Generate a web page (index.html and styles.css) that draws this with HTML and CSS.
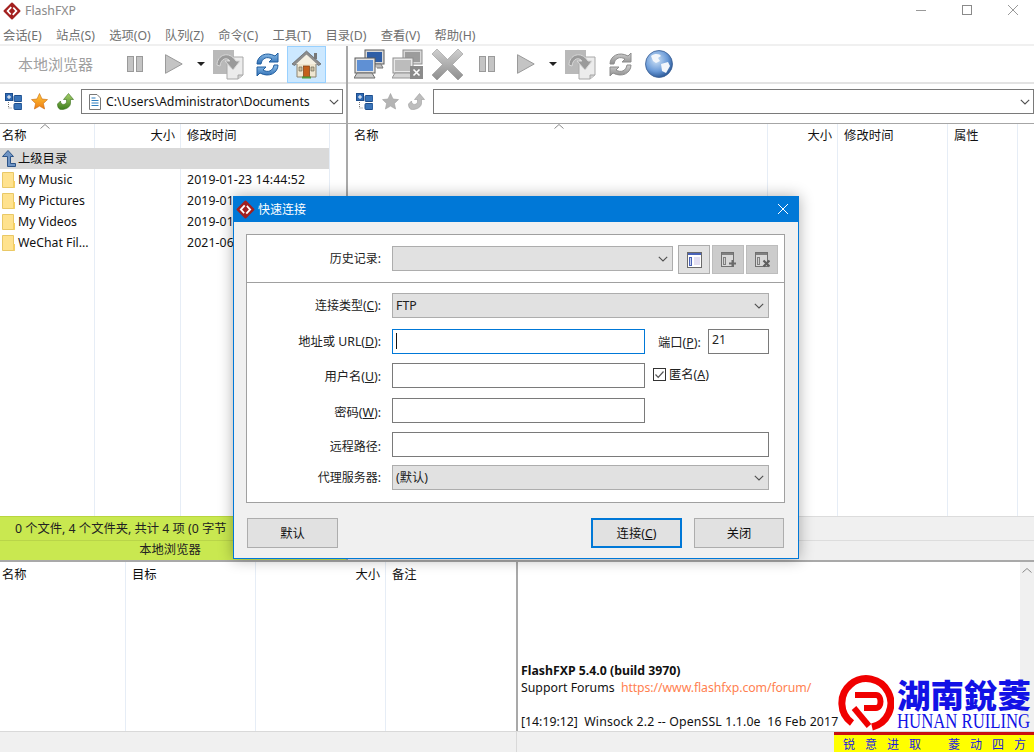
FILE: index.html
```html
<!DOCTYPE html>
<html lang="zh-CN">
<head>
<meta charset="utf-8">
<title>FlashFXP</title>
<link rel="stylesheet" href="styles.css">
</head>
<body>
<svg class="defs" width="0" height="0" aria-hidden="true">
  <defs>
    <linearGradient id="gBlue" x1="0" y1="0" x2="0" y2="1"><stop offset="0" stop-color="#8fc0ea"/><stop offset="1" stop-color="#2f6fb5"/></linearGradient>
    <linearGradient id="gGrey" x1="0" y1="0" x2="0" y2="1"><stop offset="0" stop-color="#cfcfcf"/><stop offset="1" stop-color="#8e8e8e"/></linearGradient>
    <linearGradient id="gStar" x1="0" y1="0" x2="0" y2="1"><stop offset="0" stop-color="#ffc93a"/><stop offset="1" stop-color="#ef7d12"/></linearGradient>
    <linearGradient id="gGreen" x1="0" y1="0" x2="0" y2="1"><stop offset="0" stop-color="#a6d06a"/><stop offset="1" stop-color="#3f7f1d"/></linearGradient>
    <radialGradient id="gGlobe" cx=".4" cy=".35" r=".7"><stop offset="0" stop-color="#cfe3f7"/><stop offset=".6" stop-color="#6b9bd8"/><stop offset="1" stop-color="#23508f"/></radialGradient>
    <symbol id="logo" viewBox="0 0 18 18">
      <path d="M9 1.500 16.500 9 9 16.500 1.500 9Z" fill="#a3201f" stroke="#a3201f" stroke-width="2" stroke-linejoin="round"/>
      <path d="M7.600 4.500 3.400 9 7.200 13 8.300 11.800 5.800 9 8.900 5.700ZM10.400 13.500 14.600 9 10.800 5 9.700 6.200 12.200 9 9.100 12.300Z" fill="#fff"/>
    </symbol>
    <symbol id="pause" viewBox="0 0 16 16">
      <rect x=".5" y=".5" width="6" height="15" fill="#c4c4c4" stroke="#9a9a9a"/>
      <rect x="9.500" y=".5" width="6" height="15" fill="#c4c4c4" stroke="#9a9a9a"/>
    </symbol>
    <symbol id="play" viewBox="0 0 18 20">
      <path d="M.5 .7 17.200 10 .5 19.300Z" fill="#c4c4c4" stroke="#9a9a9a"/>
    </symbol>
    <symbol id="transfer" viewBox="0 0 31 31">
      <rect x="0" y="1" width="21" height="24" fill="#b9b9b9"/>
      <path d="M14 8H30V26L25 30H14Z" fill="#ececec" stroke="#a8a8a8"/>
      <path d="M25 30V26H30" fill="#d0d0d0" stroke="#a8a8a8"/>
      <path d="M4 16C4 6 16 1 23 12L27 12 20 21 12 12 17 12C14 8 8 9 7 17Z" fill="#9a9a9a" stroke="#d8d8d8"/>
    </symbol>
    <symbol id="refresh" viewBox="0 0 27 27">
      <path d="M3 13C3 5 12 0 21 5L24 2V11H15L18 8C13 5 8 7 7 13Z" fill="url(#gBlue)" stroke="#1f5d9f"/>
      <path d="M24 14C24 22 15 27 6 22L3 25V16H12L9 19C14 22 19 20 20 14Z" fill="url(#gBlue)" stroke="#1f5d9f"/>
    </symbol>
    <symbol id="refreshOff" viewBox="0 0 27 27">
      <path d="M3 13C3 5 12 0 21 5L24 2V11H15L18 8C13 5 8 7 7 13Z" fill="url(#gGrey)" stroke="#8c8c8c"/>
      <path d="M24 14C24 22 15 27 6 22L3 25V16H12L9 19C14 22 19 20 20 14Z" fill="url(#gGrey)" stroke="#8c8c8c"/>
    </symbol>
    <symbol id="home" viewBox="0 0 29 29">
      <path d="M5 13H24V27H5Z" fill="#efe6d0" stroke="#8b8270"/>
      <path d="M14.500 1 29 14 26.500 15.500 14.500 5 2.500 15.500 0 14Z" fill="#8d8d8d" stroke="#5f5f5f" stroke-width=".7"/>
      <path d="M14.500 4.500 25 14H4Z" fill="#f5f0e2"/>
      <rect x="22" y="3" width="3" height="6" fill="#777"/>
      <rect x="11.500" y="16" width="6" height="11" fill="#c4601c" stroke="#7b3a10" stroke-width=".7"/>
      <path d="M7 17h3v4H7ZM19 17h3v4h-3Z" fill="#c9bda0" stroke="#6f6a5c" stroke-width=".7"/>
      <rect x="10" y="26.500" width="9" height="2" fill="#4f9a3a"/>
    </symbol>
    <symbol id="tree" viewBox="0 0 17 17">
      <rect x=".5" y=".5" width="7" height="7" fill="#2e69b3" stroke="#1d4d8c"/>
      <path d="M2 4h4M4 2v4" stroke="#fff"/>
      <rect x="9" y="2.500" width="8" height="6" rx="1" fill="#3a74b8" stroke="#1d4d8c"/>
      <rect x="9" y="10.500" width="8" height="6" rx="1" fill="#3a74b8" stroke="#1d4d8c"/>
      <path d="M3.500 9v6h4" fill="none" stroke="#777" stroke-dasharray="1 1"/>
    </symbol>
    <symbol id="star" viewBox="0 0 17 17">
      <path d="M8.500 .5 11 6 16.500 6.600 12.400 10.400 13.600 16 8.500 13.100 3.400 16 4.600 10.400 .5 6.600 6 6Z" fill="url(#gStar)" stroke="#c9680d" stroke-width=".6"/>
    </symbol>
    <symbol id="starOff" viewBox="0 0 17 17">
      <path d="M8.500 .5 11 6 16.500 6.600 12.400 10.400 13.600 16 8.500 13.100 3.400 16 4.600 10.400 .5 6.600 6 6Z" fill="#b4b4b4" stroke="#a0a0a0" stroke-width=".6"/>
    </symbol>
    <symbol id="upGreen" viewBox="0 0 17 17">
      <path d="M11.500 .5 16.500 6.500H13.500V10C13.500 14 9 16.500 4.500 16.500 1.500 16.500 .5 14 .5 11L3.500 8C3.500 11 6 12 8 11 9 10.500 9.500 9.500 9.500 8.500V6.500H6.500Z" fill="url(#gGreen)" stroke="#3a6f1c" stroke-width=".6"/>
    </symbol>
    <symbol id="upOff" viewBox="0 0 17 17">
      <path d="M11.500 .5 16.500 6.500H13.500V10C13.500 14 9 16.500 4.500 16.500 1.500 16.500 .5 14 .5 11L3.500 8C3.500 11 6 12 8 11 9 10.500 9.500 9.500 9.500 8.500V6.500H6.500Z" fill="#bdbdbd" stroke="#9c9c9c" stroke-width=".6"/>
    </symbol>
    <symbol id="chev" viewBox="0 0 10 6">
      <path d="M.8 .8 5 5 9.200 .8" fill="none" stroke="#505050" stroke-width="1.100"/>
    </symbol>
    <symbol id="sort" viewBox="0 0 10 5">
      <path d="M.5 4.500 5 .5 9.500 4.500" fill="none" stroke="#8a8a8a"/>
    </symbol>
    <symbol id="folder" viewBox="0 0 13 16">
      <path d="M.5 .5H11.500V14L12.500 15.500H.5Z" fill="#ffe28e" stroke="#e9c866"/>
      <rect x="11" y="9" width="2" height="6.500" fill="#f5cf63"/>
    </symbol>
    <symbol id="pc" viewBox="0 0 31 30">
      <rect x="11" y="1" width="19" height="14" fill="#d8d8d8" stroke="#5a5a5a"/>
      <rect x="13" y="3" width="15" height="10" fill="#2f5ea6"/>
      <path d="M14 15h13l2 4H23" fill="#bdbdbd" stroke="#777"/>
      <rect x="1" y="9" width="20" height="15" fill="#e2e2e2" stroke="#5a5a5a"/>
      <rect x="3" y="11" width="16" height="11" fill="#5f90d4"/>
      <path d="M3 24h15l3 5H0Z" fill="#c9c9c9" stroke="#6d6d6d"/>
    </symbol>
    <symbol id="pcOff" viewBox="0 0 31 30">
      <rect x="11" y="1" width="19" height="14" fill="#d8d8d8" stroke="#8d8d8d"/>
      <rect x="13" y="3" width="15" height="10" fill="#9c9c9c"/>
      <rect x="1" y="9" width="20" height="15" fill="#e8e8e8" stroke="#8d8d8d"/>
      <rect x="3" y="11" width="16" height="11" fill="#bcbcbc"/>
      <path d="M3 24h15l3 5H0Z" fill="#d4d4d4" stroke="#959595"/>
      <rect x="18" y="17" width="13" height="13" fill="#8b8b8b"/>
      <path d="M21.500 20.500 27.500 26.500M27.500 20.500 21.500 26.500" stroke="#fff" stroke-width="1.600"/>
    </symbol>
    <symbol id="cross" viewBox="0 0 31 31">
      <path d="M5 0 15.500 10.500 26 0 31 5 20.500 15.500 31 26 26 31 15.500 20.500 5 31 0 26 10.500 15.500 0 5Z" fill="url(#gGrey)" stroke="#888" stroke-width=".5"/>
    </symbol>
    <symbol id="globe" viewBox="0 0 28 28">
      <circle cx="14" cy="14" r="13.500" fill="url(#gGlobe)" stroke="#3b5f94" stroke-width=".8"/>
      <path d="M6 6C10 3 15 4 16 6L13 8 15 11 11 13 8 11ZM16 14 23 12 25 16 21 23 17 21Z" fill="#f2f6fb"/>
    </symbol>
    <symbol id="upParent" viewBox="0 0 14 17">
      <path d="M6 .5 11.500 6.500H8.500V13.500H13.500V16.500H5.500V6.500H.5Z" fill="#6f94c4" stroke="#2d5488"/>
    </symbol>
    <symbol id="docIcon" viewBox="0 0 12 16">
      <path d="M.5 .5H8L11.500 4V15.500H.5Z" fill="#fff" stroke="#777"/>
      <path d="M2.500 4h4M2.500 6.500h7M2.500 9h7M2.500 11.500h7" stroke="#2f7fbf"/>
    </symbol>
    <symbol id="histView" viewBox="0 0 15 16">
      <rect x=".5" y=".5" width="14" height="15" fill="#fff" stroke="#6a6a6a"/>
      <rect x="1" y="1" width="13" height="2" fill="#4a63b8"/>
      <rect x="2.500" y="5.500" width="2" height="8" fill="#c9d2ee" stroke="#4a63b8"/>
      <path d="M7 6h6M7 8h6M7 10h6M7 12h6" stroke="#c9c0e6"/>
    </symbol>
    <symbol id="histAdd" viewBox="0 0 15 16">
      <rect x=".5" y=".5" width="12" height="14" fill="#d8d8d8" stroke="#707070"/>
      <rect x="1" y="1" width="11" height="2" fill="#808080"/>
      <rect x="2.500" y="5.500" width="2" height="7" fill="#d0d0d0" stroke="#808080"/>
      <path d="M8 11.500h7M11.500 8v7" stroke="#6a6a6a" stroke-width="2"/>
    </symbol>
    <symbol id="histDel" viewBox="0 0 15 16">
      <rect x=".5" y=".5" width="12" height="14" fill="#d8d8d8" stroke="#707070"/>
      <rect x="1" y="1" width="11" height="2" fill="#808080"/>
      <rect x="2.500" y="5.500" width="2" height="7" fill="#d0d0d0" stroke="#808080"/>
      <path d="M8.500 8.500 14.500 14.500M14.500 8.500 8.500 14.500" stroke="#5f5f5f" stroke-width="2.200"/>
    </symbol>
  </defs>
</svg>

<div class="app">
  <header class="titlebar">
    <svg class="title-logo"><use href="#logo"/></svg>
    <span class="title-text">FlashFXP</span>
    <div class="winctl">
      <svg class="win-btn" viewBox="0 0 10 10"><path d="M0 5.500H10" stroke="#999"/></svg>
      <svg class="win-btn" viewBox="0 0 10 10"><rect x=".5" y=".5" width="9" height="9" fill="none" stroke="#8a8a8a"/></svg>
      <svg class="win-btn" viewBox="0 0 10 10"><path d="M0 0 10 10M10 0 0 10" stroke="#999"/></svg>
    </div>
  </header>
  <nav class="menubar">
    <span>会话(E)</span><span>站点(S)</span><span>选项(O)</span><span>队列(Z)</span><span>命令(C)</span><span>工具(T)</span><span>目录(D)</span><span>查看(V)</span><span>帮助(H)</span>
  </nav>

  <div class="panes">
    <section class="pane pane-left">
      <div class="toolbar toolbar-left">
        <span class="tb-label">本地浏览器</span>
        <svg class="i-pause"><use href="#pause"/></svg>
        <svg class="i-play"><use href="#play"/></svg>
        <span class="drop"></span>
        <svg class="i-transfer"><use href="#transfer"/></svg>
        <svg class="i-refresh"><use href="#refresh"/></svg>
        <span class="home-btn"><svg class="i-home"><use href="#home"/></svg></span>
      </div>
      <div class="addr addr-left">
        <svg class="i-small"><use href="#tree"/></svg>
        <svg class="i-small"><use href="#star"/></svg>
        <svg class="i-small"><use href="#upGreen"/></svg>
        <div class="path-box path-left">
          <svg class="i-doc"><use href="#docIcon"/></svg>
          <span class="path-text">C:\Users\Administrator\Documents</span>
          <svg class="chev"><use href="#chev"/></svg>
        </div>
      </div>
      <div class="list list-left">
        <div class="row head">
          <span class="c-name">名称</span><span class="c-size">大小</span><span class="c-date">修改时间</span>
          <svg class="sort sort-left"><use href="#sort"/></svg>
        </div>
        <div class="row sel"><span class="c-name with-ic"><svg class="i-up"><use href="#upParent"/></svg>上级目录</span><span class="c-size"></span><span class="c-date"></span></div>
        <div class="row"><span class="c-name with-ic"><svg class="i-folder"><use href="#folder"/></svg>My Music</span><span class="c-size"></span><span class="c-date">2019-01-23 14:44:52</span></div>
        <div class="row"><span class="c-name with-ic"><svg class="i-folder"><use href="#folder"/></svg>My Pictures</span><span class="c-size"></span><span class="c-date">2019-01-23 14:44:52</span></div>
        <div class="row"><span class="c-name with-ic"><svg class="i-folder"><use href="#folder"/></svg>My Videos</span><span class="c-size"></span><span class="c-date">2019-01-23 14:44:52</span></div>
        <div class="row"><span class="c-name with-ic"><svg class="i-folder"><use href="#folder"/></svg>WeChat Fil...</span><span class="c-size"></span><span class="c-date">2021-06-01 09:12:36</span></div>
      </div>
      <div class="status status-left">
        <div class="st-line st-count">0 个文件, 4 个文件夹, 共计 4 项 (0 字节</div>
        <div class="st-line st-name">本地浏览器</div>
      </div>
    </section>

    <section class="pane pane-right">
      <div class="toolbar toolbar-right">
        <svg class="i-pc"><use href="#pc"/></svg>
        <svg class="i-pc"><use href="#pcOff"/></svg>
        <svg class="i-cross"><use href="#cross"/></svg>
        <svg class="i-pause"><use href="#pause"/></svg>
        <svg class="i-play"><use href="#play"/></svg>
        <span class="drop"></span>
        <svg class="i-transfer"><use href="#transfer"/></svg>
        <svg class="i-refresh"><use href="#refreshOff"/></svg>
        <svg class="i-globe"><use href="#globe"/></svg>
      </div>
      <div class="addr addr-right">
        <svg class="i-small"><use href="#tree"/></svg>
        <svg class="i-small"><use href="#starOff"/></svg>
        <svg class="i-small"><use href="#upOff"/></svg>
        <div class="path-box path-right"><svg class="chev"><use href="#chev"/></svg></div>
      </div>
      <div class="list list-right">
        <div class="row head">
          <span class="c-name">名称</span><span class="c-size">大小</span><span class="c-date">修改时间</span><span class="c-attr">属性</span>
          <svg class="sort sort-right"><use href="#sort"/></svg>
        </div>
      </div>
      <div class="status status-right"><div class="st-line"></div><div class="st-line"></div></div>
    </section>
  </div>

  <div class="bottom">
    <section class="queue">
      <div class="q-head"><span>名称</span><span>目标</span><span class="q-size">大小</span><span>备注</span></div>
    </section>
    <section class="log">
      <div class="log-lines">
        <div class="log-b">FlashFXP 5.4.0 (build 3970)</div>
        <div>Support Forums&nbsp; <span class="log-link">https://www.flashfxp.com/forum/</span></div>
        <div>&nbsp;</div>
        <div>[14:19:12]&nbsp; <span class="log-ver">Winsock 2.2 -- OpenSSL 1.1.0e&nbsp; 16 Feb 2017</span></div>
      </div>
      <div class="scroll"><svg class="sort"><use href="#sort"/></svg></div>
    </section>
  </div>
  <footer class="statusbar"><span class="sb-left"></span><span></span></footer>
</div>

<div class="dialog">
  <div class="dlg-title">
    <svg class="dlg-logo"><use href="#logo"/></svg>
    <span class="dlg-name">快速连接</span>
    <svg class="dlg-close" viewBox="0 0 10 10"><path d="M0 0 10 10M10 0 0 10" stroke="#fff"/></svg>
  </div>
  <div class="panel">
    <div class="hist">
      <label class="lb lb-cjk">历史记录:</label>
      <div class="combo c-hist"><svg class="chev"><use href="#chev"/></svg></div>
      <div class="hist-btns">
        <span class="hb"><svg class="hb-ic"><use href="#histView"/></svg></span>
        <span class="hb off"><svg class="hb-ic"><use href="#histAdd"/></svg></span>
        <span class="hb off"><svg class="hb-ic"><use href="#histDel"/></svg></span>
      </div>
    </div>
    <div class="fields">
      <div class="f">
        <label class="lb lb-cjk">连接类型(<u>C</u>):</label>
        <div class="combo c-wide"><span>FTP</span><svg class="chev"><use href="#chev"/></svg></div>
      </div>
      <div class="f">
        <label class="lb">地址或 URL(<u>D</u>):</label>
        <div class="inp c-mid focus"><span class="caret"></span></div>
        <label class="port-lb">端口(<u>P</u>):</label>
        <div class="inp c-port">21</div>
      </div>
      <div class="f">
        <label class="lb lb-down1">用户名(<u>U</u>):</label>
        <div class="inp c-mid"></div>
        <span class="chk"><svg viewBox="0 0 13 13"><rect x=".5" y=".5" width="12" height="12" fill="#fff" stroke="#333"/><path d="M2.500 6.500 5.200 9.300 10.500 3.500" fill="none" stroke="#555" stroke-width="1.200"/></svg>匿名(<u>A</u>)</span>
      </div>
      <div class="f">
        <label class="lb lb-down2">密码(<u>W</u>):</label>
        <div class="inp c-mid"></div>
      </div>
      <div class="f">
        <label class="lb lb-cjk lb-down2">远程路径:</label>
        <div class="inp c-wide"></div>
      </div>
      <div class="f">
        <label class="lb lb-cjk">代理服务器:</label>
        <div class="combo c-wide"><span>(默认)</span><svg class="chev"><use href="#chev"/></svg></div>
      </div>
    </div>
  </div>
  <div class="dlg-btns">
    <button class="btn">默认</button>
    <span class="spacer"></span>
    <button class="btn primary">连接(<u>C</u>)</button>
    <button class="btn">关闭</button>
  </div>
</div>

<div class="mark">
  <div class="mark-top">
    <svg class="mark-logo" viewBox="0 0 56 56">
      <path d="M14 48A24.500 24.500 0 1 1 34 52" fill="none" stroke="#f00000" stroke-width="7"/>
      <path d="M17 20H38C44 20 44 33 38 33H26" fill="none" stroke="#f00000" stroke-width="6"/>
      <path d="M16 33 31 51" stroke="#f00000" stroke-width="6"/>
    </svg>
    <div class="mark-text">
      <div class="mark-cn">湖南銳菱</div>
      <div class="mark-en">HUNAN RUILING</div>
    </div>
  </div>
  <div class="mark-bar"><span>锐</span><span>意</span><span>进</span><span>取</span><span class="gap"></span><span>菱</span><span>动</span><span>四</span><span>方</span></div>
</div>
</body>
</html>
```

FILE: styles.css
```css
* { box-sizing: border-box; }
html, body { margin: 0; height: 100%; }
body {
  width: 1034px;
  height: 752px;
  overflow: hidden;
  background: #fff;
  color: #1a1a1a;
  font: 12.300px/17px "Noto Sans", "Noto Sans CJK SC", sans-serif;
  position: relative;
}
svg { display: block; flex: none; }
.defs { position: absolute; }
.app { display: flex; flex-direction: column; height: 752px; }

/* title + menu */
.titlebar { height: 24px; display: flex; align-items: flex-start; padding: 2px 0 0 3px; color: #8a8a8a; flex: none; }
.title-logo { width: 18px; height: 18px; }
.title-text { margin-left: 4px; }
.winctl { margin-left: auto; display: flex; gap: 36px; padding: 3px 16px 0 0; }
.win-btn { width: 10px; height: 10px; }
.menubar { height: 22px; display: flex; gap: 14.300px; padding: 3px 0 0 3px; color: #707070; border-bottom: 2px solid #f0f0f0; flex: none; }

/* panes */
.panes { display: grid; grid-template-columns: 346px 1fr; height: 514px; flex: none; }
.pane { display: flex; flex-direction: column; min-width: 0; }
.pane-right { border-left: 2px solid #a9a9a9; }
.toolbar { height: 38px; display: flex; align-items: center; border-bottom: 2px solid #e3e3e3; flex: none; }
.toolbar-left { padding-left: 18px; }
.toolbar-right { padding-left: 6px; }
.tb-label { width: 109px; font-size: 15px; color: #a0a0a0; padding-top: 1px; }
.i-pause { width: 16px; height: 16px; }
.i-play { width: 18px; height: 20px; margin-left: 22px; }
.drop { width: 0; height: 0; border: 4px solid transparent; border-top: 4px solid #222; border-bottom: 0; margin-left: 14px; }
.i-transfer { width: 31px; height: 31px; margin-left: 8px; }
.i-refresh { width: 27px; height: 27px; margin-left: 10px; }
.home-btn { width: 39px; height: 37px; margin-left: 6px; background: #cce8ff; border: 1px solid #99d1ff; display: flex; align-items: center; justify-content: center; }
.i-home { width: 29px; height: 29px; }
.i-pc { width: 31px; height: 30px; margin-right: 7px; }
.i-cross { width: 31px; height: 31px; margin: 0 16px 0 2px; }
.toolbar-right .i-transfer { margin-left: 8px; }
.toolbar-right .i-refresh { margin-left: 11px; }
.i-globe { width: 28px; height: 28px; margin-left: 11px; }

.addr { height: 40px; display: flex; align-items: center; gap: 9px; padding-bottom: 4px; border-bottom: 1px solid #a6a6a6; flex: none; }
.addr-left { padding-left: 5px; padding-right: 3px; }
.addr-right { padding-left: 8px; }
.i-small { width: 17px; height: 17px; }
.path-box { flex: 1; height: 25px; background: #fff; border: 1px solid #7a7a7a; display: flex; align-items: center; }
.path-left { margin-left: -2px; padding-left: 7px; }
.path-right { margin-left: -1px; }
.i-doc { width: 12px; height: 16px; }
.path-text { margin-left: 5px; color: #111; }
.chev { width: 10px; height: 6px; margin-left: auto; margin-right: 3px; }

/* lists */
.list { flex: 1; min-height: 0; position: relative; }
.list-left {
  background:
    linear-gradient(#e6edf6, #e6edf6) 94px 0 / 1px 100% no-repeat,
    linear-gradient(#e6edf6, #e6edf6) 180px 0 / 1px 100% no-repeat,
    linear-gradient(#e6edf6, #e6edf6) 329px 0 / 1px 100% no-repeat;
}
.list-right {
  background:
    linear-gradient(#e6edf6, #e6edf6) 419px 0 / 1px 100% no-repeat,
    linear-gradient(#e6edf6, #e6edf6) 489px 0 / 1px 100% no-repeat,
    linear-gradient(#e6edf6, #e6edf6) 599px 0 / 1px 100% no-repeat,
    linear-gradient(#e6edf6, #e6edf6) 669px 0 / 1px 100% no-repeat;
}
.row { display: grid; height: 21px; align-items: center; color: #111; }
.list-left .row { grid-template-columns: 95px 86px 148px; }
.list-right .row { grid-template-columns: 420px 70px 110px 70px; }
.row.head { height: 24px; padding-bottom: 2px; }
.row.sel { background: #d9d9d9; width: 329px; }
.c-name { padding-left: 2px; }
.list-right .c-name { padding-left: 6px; }
.c-size { text-align: right; padding-right: 6px; }
.c-date { padding-left: 6px; white-space: nowrap; overflow: hidden; letter-spacing: .1px; }
.c-attr { padding-left: 6px; }
.with-ic { display: flex; align-items: center; gap: 3px; white-space: nowrap; }
.i-folder { width: 13px; height: 16px; }
.i-up { width: 14px; height: 17px; margin-right: -1px; }
.sort { width: 10px; height: 5px; }
.sort-left, .sort-right { position: absolute; top: 0; }
.sort-left { left: 40px; }
.sort-right { left: 206px; }

/* status */
.status { height: 44px; flex: none; text-align: center; }
.st-line { height: 23px; line-height: 23px; }
.st-line + .st-line { height: 20px; border-top: 1px solid rgba(0, 0, 0, .08); line-height: 18px; }
.st-count { text-align: left; padding-left: 15px; white-space: nowrap; overflow: hidden; }
.st-name { padding-right: 6px; }
.status-left { background: #c9e850; border-top: 1px solid #b8d63f; color: #222; }
.status-right { background: #f0f0f0; border-top: 1px solid #dcdcdc; }

/* bottom */
.bottom { flex: 1; min-height: 0; display: grid; grid-template-columns: 516px 1fr; border-top: 2px solid #a9a9a9; }
.queue {
  background:
    linear-gradient(#e6edf6, #e6edf6) 125px 0 / 1px 100% no-repeat,
    linear-gradient(#e6edf6, #e6edf6) 255px 0 / 1px 100% no-repeat,
    linear-gradient(#e6edf6, #e6edf6) 385px 0 / 1px 100% no-repeat;
}
.q-head { display: grid; grid-template-columns: 130px 130px 130px 1fr; height: 25px; align-items: center; padding-left: 2px; color: #111; }
.q-size { text-align: right; padding-right: 12px; }
.log { border-left: 2px solid #a9a9a9; display: flex; min-width: 0; }
.log-lines { flex: 1; display: flex; flex-direction: column; justify-content: flex-end; padding: 0 0 1px 3px; white-space: nowrap; overflow: hidden; color: #111; }
.log-b { font-weight: 700; }
.log-link { color: #ff7f50; letter-spacing: -.1px; }
.log-ver { letter-spacing: .14px; }
.scroll { width: 14px; background: #f0f0f0; flex: none; padding: 6px 0 0 2px; }
.statusbar { height: 21px; flex: none; display: flex; background: #f0f0f0; border-top: 1px solid #d9d9d9; }
.sb-left { width: 517px; border-right: 1px solid #d9d9d9; }

/* dialog */
.dialog {
  position: absolute;
  left: 233px;
  top: 196px;
  width: 566px;
  height: 363px;
  background: #f0f0f0;
  border: 1px solid #0078d7;
  box-shadow: 0 0 14px rgba(0, 0, 0, .32);
  display: flex;
  flex-direction: column;
}
.dlg-title { height: 25px; background: #0078d7; color: #fff; display: flex; align-items: center; padding: 0 0 1px 2px; flex: none; }
.dlg-logo { width: 19px; height: 19px; margin-right: 3px; }
.dlg-name { font-size: 12px; }
.dlg-close { width: 10px; height: 10px; margin-left: auto; margin-right: 10px; }
.panel { margin: 12px 13px 0 12px; width: 539px; height: 269px; background: #fff; border: 1px solid #a0a0a0; flex: none; }
.hist { height: 48px; border-bottom: 1px solid #a0a0a0; display: flex; padding-top: 11px; align-items: flex-start; }
.lb { width: 134px; height: 25px; line-height: 25px; text-align: right; margin-right: 11px; flex: none; color: #222; white-space: nowrap; }
.lb-cjk { font-size: 12px; }
.lb-down1 { line-height: 27px; }
.lb-down2 { line-height: 29px; }
.combo { height: 25px; background: #e1e1e1; border: 1px solid #adadad; display: flex; align-items: center; padding-left: 3px; color: #222; flex: none; }
.combo .chev { margin-right: 4px; }
.inp { height: 25px; background: #fff; border: 1px solid #7a7a7a; flex: none; padding: 0 0 3px 3px; line-height: 20px; color: #222; }
.focus { border-color: #0078d7; }
.caret { display: block; width: 1px; height: 16px; background: #111; margin-top: 3px; }
.c-hist { width: 281px; }
.c-wide { width: 377px; }
.c-mid { width: 253px; }
.c-port { width: 61px; margin-left: 8px; }
.hist-btns { display: flex; gap: 2px; margin: -1px 0 0 5px; }
.hb { width: 32px; height: 29px; background: #e1e1e1; border: 1px solid #adadad; display: flex; align-items: center; justify-content: center; }
.hb.off { background: #cccccc; border-color: #bdbdbd; }
.hb-ic { width: 15px; height: 16px; }
.fields { padding-top: 10px; display: grid; grid-template-rows: 36px 34px 35px 34px 33px 25px; }
.f { display: flex; align-items: flex-start; }
.port-lb { margin-left: 13px; height: 25px; line-height: 27px; width: 42px; white-space: nowrap; color: #222; flex: none; }
.chk { display: flex; align-items: center; margin-left: 8px; height: 23px; color: #222; }
.chk svg { width: 13px; height: 13px; margin-right: 3px; }
.dlg-btns { display: flex; margin-top: 15px; padding: 0 14px 0 13px; gap: 12px; }
.spacer { flex: 1; }
.btn { width: 91px; height: 30px; background: #e1e1e1; border: 1px solid #adadad; font: inherit; color: #111; padding: 0; }
.btn.primary { border: 2px solid #0078d7; }
.btn:last-child { width: 90px; }

/* watermark */
.mark { position: absolute; right: 0; bottom: 0; width: 200px; height: 80px; display: flex; flex-direction: column; }
.mark-top { height: 60px; display: flex; padding-left: 4px; }
.mark-logo { width: 56px; height: 56px; margin-top: 3px; }
.mark-text { margin-left: 3px; color: #1212e6; white-space: nowrap; width: 137px; }
.mark-cn { font: 900 33.500px/37px "Noto Sans CJK SC", sans-serif; margin-top: 3px; }
.mark-en { font: 20.500px/19px "Liberation Serif", serif; width: 165px; transform: scaleX(.815); transform-origin: left center; }
.mark-bar { height: 20px; background: #ffff00; border-top: 3px solid #c81010; color: #1a1ae0; display: flex; gap: 10px; padding-left: 9px; font: 12px/17px "Noto Sans CJK SC", sans-serif; }
.mark-bar .gap { width: 7px; }
```
